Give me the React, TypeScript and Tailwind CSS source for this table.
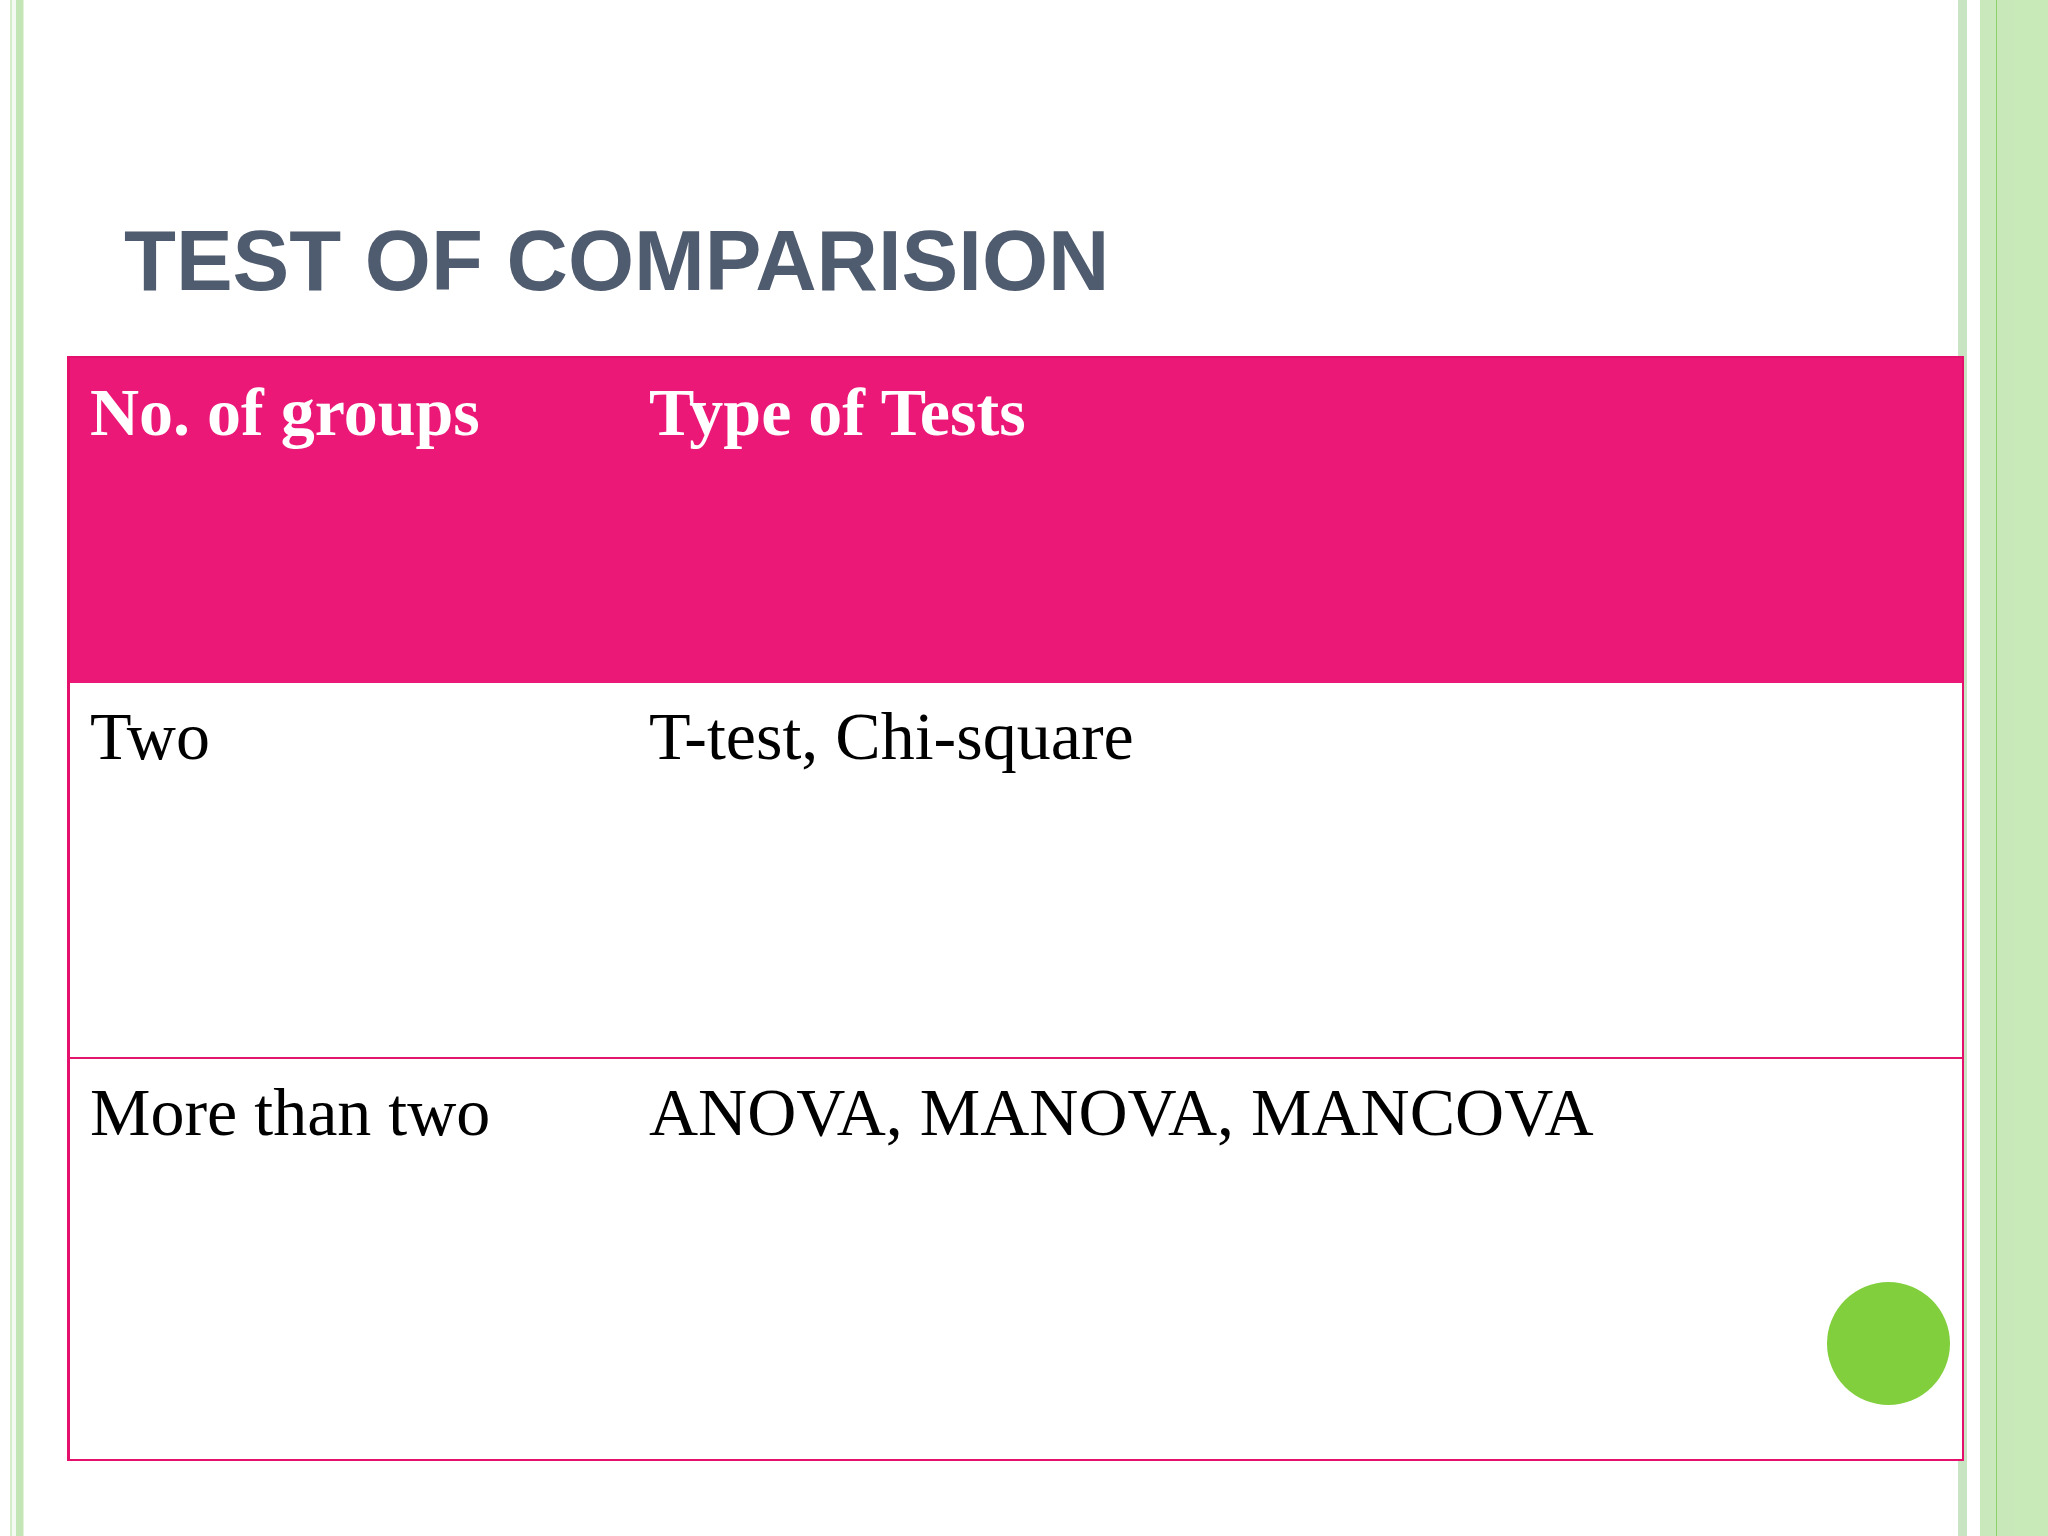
const rows = [
  { groups: 'Two', tests: 'T-test, Chi-square', h: 'h-[374px]' },
  { groups: 'More than two', tests: 'ANOVA, MANOVA, MANCOVA', h: 'h-[402px]' },
];

const serif = "font-['Liberation_Serif','Times_New_Roman',serif]";

export default function App() {
  return (
    <div className="flex w-[2048px] h-[1536px] bg-white overflow-hidden">
      {/* left edge stripes */}
      <div className="flex w-[67px] shrink-0">
        <div className="w-[10px]" />
        <div className="w-[2px] bg-[#d3ecca]" />
        <div className="w-[4px] bg-[#f4faf1]" />
        <div className="w-[7px] bg-[#c4e6b6]" />
        <div className="w-[1px] bg-[#e2f3db]" />
      </div>

      {/* slide body */}
      <div className="flex flex-col w-[1897px] shrink-0 bg-[linear-gradient(to_left,#c9e4c3_6px,#ffffff_6px)]">
        <h1 className="pt-[219px] pl-[57px] h-[356px] font-['Liberation_Sans',Arial,sans-serif] font-bold text-[85px] leading-[84px] text-[#4f5b6e]">
          TEST OF COMPARISION
        </h1>

        <div className={`flex flex-col border-[2px] border-l-[3px] border-[#e5106c] bg-white ${serif}`}>
          <div className="grid grid-cols-[559px_1fr] h-[325px] bg-[#eb1877] text-white font-bold text-[68px] leading-[68px]">
            <div className="pl-[20px] pt-[20px]">No. of groups</div>
            <div className="pl-[20px] pt-[20px]">Type of Tests</div>
          </div>
          {rows.map((r, i) => (
            <div
              key={r.groups}
              className={`relative grid grid-cols-[559px_1fr] ${r.h} text-black text-[68px] leading-[68px] ${i > 0 ? 'border-t-[2px] border-[#e3166e]' : ''}`}
            >
              <div className="pl-[20px] pt-[19px]">{r.groups}</div>
              <div className="pl-[20px] pt-[19px]">{r.tests}</div>
              {i === rows.length - 1 && (
                <div className="absolute right-[12px] bottom-[54px] w-[123px] h-[123px] rounded-full bg-[#82cf3e]" />
              )}
            </div>
          ))}
        </div>
      </div>

      {/* right edge stripes */}
      <div className="flex flex-1">
        <div className="w-[3px] bg-[#c9e4c3]" />
        <div className="w-[13px] bg-white" />
        <div className="w-[16px] bg-[#c9e8bb]" />
        <div className="w-[1px] bg-[#8dd16b]" />
        <div className="w-[18px] bg-[#c8e8b9]" />
        <div className="flex-1 bg-[#c8eab8]" />
      </div>
    </div>
  );
}
